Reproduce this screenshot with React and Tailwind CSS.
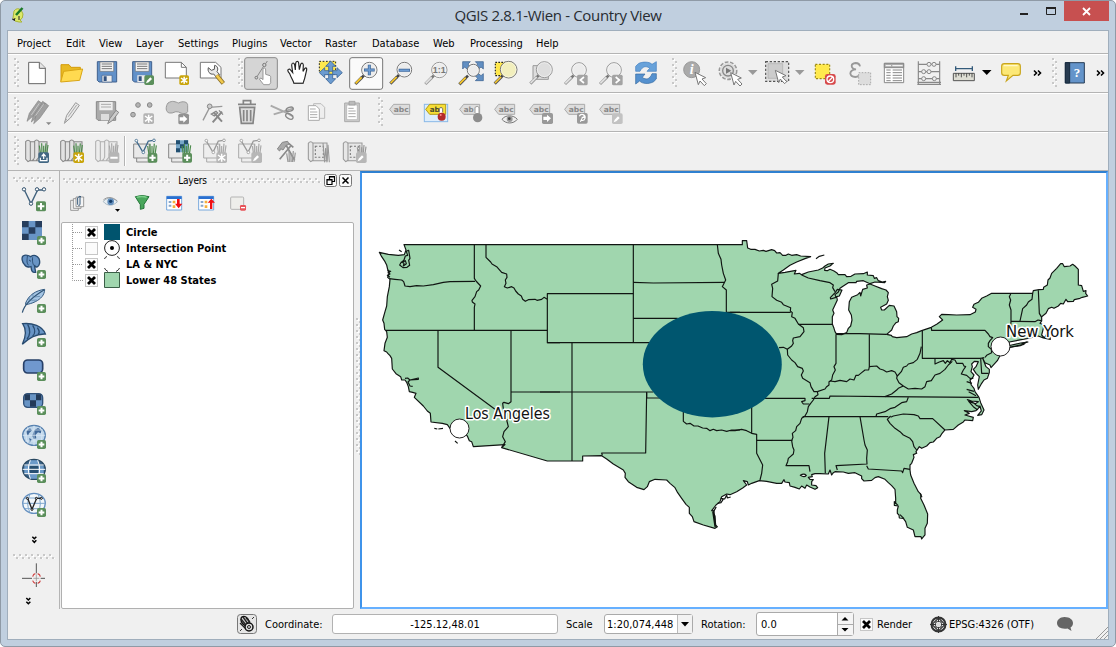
import React from "react";

const ui = "font-['DejaVu_Sans_Condensed','DejaVu_Sans',sans-serif] text-[11px] leading-[14px] text-black";

/* Icon artwork is drawn at three units per pixel; x and y give the origin of the cell. */
function Ico({ x, y, w = 35, h = 38, children, className = "" }) {
  return (
    <svg width={w} height={h} viewBox={`${x * 3} ${y * 3} ${w * 3} ${h * 3}`} className={`block shrink-0 ${className}`} fill="none">
      {children}
    </svg>
  );
}

function Grip({ w = 5, h = 29, className = "" }) {
  const dots = [];
  if (h > w) for (let y = 0; y < h - 2; y += 6) dots.push([0, y], [3, y + 3]);
  else for (let x = 0; x < w - 2; x += 6) dots.push([x, 0], [x + 3, 3]);
  return (
    <svg width={w} height={h} className={`block shrink-0 ${className}`} shapeRendering="crispEdges">
      {dots.map(([a, b], i) => (
        <g key={i}>
          <rect x={a + 1} y={b + 1} width="2" height="2" fill="#fff" />
          <rect x={a} y={b} width="2" height="2" fill="#c8c8c8" />
        </g>
      ))}
    </svg>
  );
}

function Badge({ x, y, kind = "plus", fill = "#5b8f5b", s = 27 }) {
  const c = s / 2;
  return (
    <g transform={`translate(${x} ${y})`}>
      <rect width={s} height={s} rx="5" fill={fill} />
      {kind === "plus" && <path d={`M${c} 5V${s - 5}M5 ${c}H${s - 5}`} stroke="#fff" strokeWidth="6" />}
      {kind === "minus" && <path d={`M5 ${c}H${s - 5}`} stroke="#fff" strokeWidth="6" />}
      {kind === "star" && <path d={`M${c} 4V${s - 4}M5 8L${s - 5} ${s - 8}M5 ${s - 8}L${s - 5} 8`} stroke="#fff" strokeWidth="4.5" />}
      {kind === "pen" && <path d={`M5 ${s - 5}l3-8 10-10 5 5-10 10z`} fill="#fff" />}
      {kind === "arrow" && <path d={`M4 11h11V5l12 11-12 11v-6H4z`} fill="#fff" />}
      {kind === "lt" && <path d={`M21 7L10 ${c} 21 ${s - 7}`} stroke="#fff" strokeWidth="5" />}
      {kind === "gt" && <path d={`M11 7L22 ${c} 11 ${s - 7}`} stroke="#fff" strokeWidth="5" />}
      {kind === "turn" && <path d="M7 10a9 9 0 1 1 6 12M14 13h7v-5M16 15l-6 11" stroke="#fff" strokeWidth="3.500" />}
      {kind === "share" && <path d="M6 16v9h20v-9M16 20V6M10 12l6-7 6 7" stroke="#fff" strokeWidth="3.500" />}
    </g>
  );
}

function Lens({ cx, cy, r = 22, color = true, fill = "#ececec", children }) {
  return (
    <g>
      <path d={`M${cx - 16} ${cy + 16}L${cx - 24} ${cy + 24}`} stroke={color ? "#444" : "#777"} strokeWidth="8" />
      <path d={`M${cx - 22} ${cy + 22}L${cx - 42} ${cy + 42}`} stroke={color ? "#555" : "#999"} strokeWidth="9" />
      <path d={`M${cx - 23} ${cy + 22}L${cx - 41} ${cy + 40}`} stroke={color ? "#fcca28" : "#e2e2e2"} strokeWidth="5" />
      <circle cx={cx} cy={cy} r={r} fill={fill} stroke={color ? "#777" : "#999"} strokeWidth="3" />
      <circle cx={cx} cy={cy} r={r - 3} stroke="#fff" strokeOpacity=".7" strokeWidth="2" />
      {children}
    </g>
  );
}

const Cursor = ({ x, y }) => (
  <path transform={`translate(${x} ${y})`} d="M0 0l32 16-11 4 13 14-6 6-13-14-5 11z" fill="#fff" stroke="#777" strokeWidth="3" />
);

const Arrow = ({ fill = "#999", className = "" }) => (
  <svg width="12" height="38" viewBox="0 0 12 38" className={`block shrink-0 ${className}`}>
    <path d="M0 16h9.500L4.750 21z" fill={fill} />
  </svg>
);

const Chevrons = ({ w = 16 }) => (
  <svg width={w} height="38" viewBox={`0 0 ${w} 38`} className="block shrink-0" fill="none">
    <path d="M5 16.500l2.500 2.500L5 21.500M9 16.500l2.500 2.500L9 21.500" stroke="#000" strokeWidth="1.600" />
  </svg>
);

const ROW = "flex h-[39px] shrink-0 items-start border-b border-[#b4b4b4] pl-[6px] shadow-[inset_0_1px_0_#fff]";

function RowOne() {
  return (
    <div className={ROW}>
      <Grip className="mt-[4px]" />
      <Ico x={19} y={54}>
        <path d="M86 187h33l17 17v47H86z" fill="#fff" stroke="#666" strokeWidth="3" />
        <path d="M118 187v18h18" fill="#e5e5e5" stroke="#666" strokeWidth="3" />
      </Ico>
      <Ico x={54} y={54}>
        <path d="M183 244v-50h24l6 8h28v12" fill="#e8b923" stroke="#d49c0c" strokeWidth="3" />
        <path d="M182 246l9-32 57-7-9 34z" fill="#ffda50" stroke="#d9a514" strokeWidth="3" />
      </Ico>
      <Ico x={89} y={54}>
        <path d="M292 185h58v61h-53l-5-5z" fill="#6291c9" stroke="#40618e" strokeWidth="3" />
        <path d="M300 186h41v28h-41z" fill="#f4f4f4" stroke="#777" strokeWidth="2" />
        <path d="M305 192h31M305 199h31M305 206h31" stroke="#777" strokeWidth="3" />
        <path d="M306 226h30v20h-30z" fill="#ececec" stroke="#40618e" strokeWidth="2" /><path d="M311 229h9v14h-9z" fill="#33527f" />
      </Ico>
      <Ico x={124} y={54}>
        <path d="M398 185h57v61h-52l-5-5z" fill="#6291c9" stroke="#40618e" strokeWidth="3" />
        <path d="M406 186h41v28h-41z" fill="#f4f4f4" stroke="#777" strokeWidth="2" />
        <path d="M411 192h31M411 199h31M411 206h31" stroke="#777" strokeWidth="3" />
        <path d="M412 226h24v20h-24z" fill="#ececec" /><path d="M416 229h9v14h-9z" fill="#33527f" />
        <Badge x={433} y={226} kind="pen" s={29} />
      </Ico>
      <Ico x={159} y={54}>
        <path d="M496 187h48l15 15v32h-63z" fill="#fff" stroke="#777" strokeWidth="3" /><path d="M544 187v15h15" stroke="#777" strokeWidth="3" />
        <Badge x={538} y={226} kind="star" fill="#c9a50c" s={29} />
      </Ico>
      <Ico x={194} y={54}>
        <path d="M601 187h46l16 15v32h-62z" fill="#fff" stroke="#777" strokeWidth="3" />
        <path d="M625 203l9 8 9-3 1-12c10 2 11 13 7 19l8 9-9 9-9-11c-12 3-19-8-16-19z" fill="#e9e9e9" stroke="#555" strokeWidth="3" />
        <path d="M650 226l20 24" stroke="#8c702a" strokeWidth="13" /><path d="M650 226l19 23" stroke="#f1c94c" strokeWidth="8" />
      </Ico>
      <Grip className="mt-[4px] ml-[9px] mr-[1px]" />
      <Ico x={244} y={54}>
        <rect x="734" y="173" width="98" height="95" rx="7" fill="#d5d5d5" stroke="#8a8a8a" strokeWidth="3" />
        <path d="M790 200l-19 30M797 191l5-8" stroke="#8a8a8a" strokeWidth="3" /><circle cx="793" cy="195" r="5" stroke="#777" strokeWidth="3" /><circle cx="769" cy="233" r="4" stroke="#777" strokeWidth="3" />
        <path d="M789 206c4-4 8-2 8 4v13l13 4q2 1 2 5v16l-4 6h-17l-13-17c2-4 7-3 11 2z" fill="#fff" stroke="#888" strokeWidth="2.500" />
      </Ico>
      <Ico x={279} y={54}>
        <path d="M869 221c-8-8-7-14 0-14l9 11-3-23c1-8 7-8 9 0l2 15 1-20c1-8 9-8 9 0l2 19 4-16c3-6 8-4 8 3l-1 18 5-8c4-4 7-2 6 4l-6 25-5 15h-27c-4-12-9-17-13-29z" fill="#fff" stroke="#222" strokeWidth="3.500" />
        <path d="M882 249h28" stroke="#888" strokeWidth="2" />
      </Ico>
      <Ico x={314} y={54}>
        <path d="M958 184h49v39h-40l-9-9z" fill="#ffe84c" stroke="#222" strokeWidth="3" strokeDasharray="5 5" />
        <path d="M992 183l15 16h-9v15h-12v-15h-9zM992 252l15-16h-9v-13h-12v13h-9zM958 218l16-15v9h13v12h-13v9zM1027 218l-16-15v9h-13v12h13v9z" fill="#6b9bd0" stroke="#3b6596" strokeWidth="2.500" />
      </Ico>
      <Ico x={349} y={54}>
        <rect x="1049" y="173" width="99" height="95" rx="7" fill="#fafafa" stroke="#777" strokeWidth="3" />
        <Lens cx={1108} cy={210} r={23}><path d="M1108 194v32M1092 210h32" stroke="#3c6496" strokeWidth="9" /><path d="M1108 196v28M1094 210h28" stroke="#6d9cd2" strokeWidth="5" /></Lens>
      </Ico>
      <Ico x={14} y={54}><Lens cx={103} cy={209}><path d="M86 211h34" stroke="#3c6496" strokeWidth="9" /><path d="M88 211h30" stroke="#6d9cd2" strokeWidth="5" /></Lens></Ico>
      <Ico x={49} y={54}><Lens cx={208} cy={210} r={23} color={false}><text x="208" y="220" textAnchor="middle" fontFamily="Liberation Sans" fontWeight="700" fontSize="27" fill="#777">1:1</text></Lens></Ico>
      <Ico x={84} y={54}>
        <path d="M278 185h23l-7 7 8 10-8 8-10-9-6 6zM340 185h-24l7 7-8 10 8 8 10-9 7 6zM340 242h-24l7-7-8-8 8-8 10 8 7-6z" fill="#628fc2" stroke="#335a8b" strokeWidth="2" />
        <Lens cx={310} cy={211} r={18} />
      </Ico>
      <Ico x={119} y={54}>
        <path d="M376 187h50v40h-50z" fill="#ffe84c" stroke="#222" strokeWidth="3.500" strokeDasharray="5 4" />
        <Lens cx={416} cy={209} r={25} fill="#f2efbd" />
      </Ico>
      <Ico x={154} y={54}>
        <path d="M489 197h46v41h-46z" fill="#ddd" stroke="#999" strokeWidth="3" /><Lens cx={523} cy={209} r={24} color={false} fill="#dedede" />
      </Ico>
      <Ico x={189} y={54}><Lens cx={627} cy={210} color={false} /><Badge x={621} y={224} kind="lt" fill="#a3a3a3" s={32} /></Ico>
      <Ico x={224} y={54}><Lens cx={732} cy={210} color={false} /><Badge x={726} y={224} kind="gt" fill="#a3a3a3" s={32} /></Ico>
      <Ico x={259} y={54}>
        <path d="M797 214v-15l8-8c13-7 34-6 41 2l13-8v29h-28l8-9c-9-8-22-7-29 9z" fill="#68a2da" stroke="#427fc0" strokeWidth="2" />
        <path d="M859 221v16l-8 8c-14 8-34 7-42-2l-12 9v-30h28l-8 10c10 8 22 7 29-11z" fill="#5591cf" stroke="#34689f" strokeWidth="2" />
      </Ico>
      <Grip className="mt-[4px] ml-[8px] mr-[1px]" />
      <Ico x={308} y={54}>
        <circle cx="965" cy="209" r="24" fill="#aaa" stroke="#999" strokeWidth="3" />
        <text x="965" y="223" textAnchor="middle" fontFamily="Liberation Serif" fontStyle="italic" fontWeight="700" fontSize="42" fill="#fff">i</text>
        <Cursor x={975} y={217} />
      </Ico>
      <Ico x={343} y={54}>
        <circle cx="1074" cy="212" r="26" stroke="#999" strokeWidth="5" strokeDasharray="11 5" /><circle cx="1074" cy="212" r="23" fill="#ddd" /><circle cx="1074" cy="212" r="16" stroke="#888" strokeWidth="4" />
        <path d="M1068 203l16 9-16 9z" fill="#777" /><Cursor x={1082} y={218} />
      </Ico>
      <Arrow />
      <Ico x={20} y={54}>
        <path d="M77 185h69v59H77z" fill="#ddd" stroke="#555" strokeWidth="3.500" strokeDasharray="7 5" /><path d="M84 191h44v44H84z" fill="#ccc" stroke="#aaa" strokeWidth="2" />
        <Cursor x={106} y={211} />
      </Ico>
      <Arrow />
      <Ico x={67} y={54}>
        <path d="M226 193h43v43h-43z" fill="#ffe94c" stroke="#9c8916" strokeWidth="3.500" strokeDasharray="6 5" />
        <rect x="255" y="222" width="32" height="32" rx="7" fill="#d7494b" /><circle cx="271" cy="238" r="10" stroke="#fff" strokeWidth="4" /><path d="M264 246l15-16" stroke="#fff" strokeWidth="4" />
      </Ico>
      <Ico x={102} y={54}>
        <path d="M360 199q-2-10-13-10-12 1-12 9 1 9 13 10-16 1-17 12 1 10 15 11 13-1 16-11" stroke="#999" strokeWidth="5.500" />
        <path d="M356 218h36v36h-36z" fill="#ddd" stroke="#aaa" strokeWidth="3" strokeDasharray="5 4" />
      </Ico>
      <Ico x={137} y={54}>
        <path d="M433 190h58v58h-58z" fill="#fff" stroke="#888" strokeWidth="3" /><path d="M433 190h58v13h-58z" fill="#aaa" stroke="#888" strokeWidth="3" />
        <path d="M437 197h16M457 197h31" stroke="#fff" strokeWidth="3" />
        <path d="M439 210h13M458 210h28M439 218h13M458 218h28M439 226h13M458 226h28M439 234h13M458 234h28M439 242h13M458 242h28" stroke="#888" strokeWidth="3" />
      </Ico>
      <Ico x={172} y={54}>
        <path d="M535 184v68M599 184v68M532 253h71M532 247h71M535 193h64M535 215h64M535 236h64" stroke="#888" strokeWidth="3.500" />
        <g fill="#eee" stroke="#888" strokeWidth="3"><circle cx="567" cy="193" r="6" /><circle cx="582" cy="193" r="6" /><circle cx="551" cy="215" r="6" /><circle cx="567" cy="215" r="6" /><circle cx="551" cy="236" r="6" /><circle cx="583" cy="236" r="6" /></g>
      </Ico>
      <Ico x={207} y={54}>
        <path d="M647 199v14M697 199v14M647 206h50" stroke="#345b7b" strokeWidth="4" />
        <path d="M640 220h63v22h-63z" fill="#deded4" stroke="#555" strokeWidth="3" /><path d="M648 220v12M656 220v7M664 220v12M672 220v7M680 220v12M688 220v7M696 220v12" stroke="#333" strokeWidth="2.500" />
      </Ico>
      <Arrow fill="#000" />
      <Ico x={254} y={54}>
        <path d="M793 191h40q8 0 8 8v19q0 8-8 8h-14l-20 17 6-17h-12q-8 0-8-8v-19q0-8 8-8z" fill="#fce877" stroke="#c9a51c" strokeWidth="3.500" /><path d="M791 197h42" stroke="#fff8c8" strokeWidth="4" />
      </Ico>
      <Chevrons w={20} />
      <Grip className="mt-[4px] ml-[3px] mr-[1px]" />
      <Ico x={318} y={54} w={34}>
        <path d="M976 188h57v61h-57z" fill="#6494ca" stroke="#263c55" strokeWidth="3" /><path d="M976 188h13v61h-13z" fill="#273b50" stroke="#172a3d" strokeWidth="3" />
        <text x="1011" y="231" textAnchor="middle" fontFamily="Liberation Serif" fontWeight="700" fontSize="39" fill="#fff">?</text>
      </Ico>
      <Chevrons w={14} />
    </div>
  );
}

function Tag({ x, label = "abc", yellow, children }) {
  return (
    <g>
      <path d={`M${x} 328l12-15h48v30h-48z`} fill={yellow ? "#f7de35" : "#ddd"} stroke={yellow ? "#b09b1c" : "#aaa"} strokeWidth="3" />
      <text x={x + 12} y="335" fontFamily="DejaVu Sans" fontWeight="700" fontSize="22" textLength={label.length * 15} lengthAdjust="spacingAndGlyphs" fill={yellow ? "#4b4b2c" : "#888"}>{label}</text>
      {children}
    </g>
  );
}

function RowTwo() {
  const pencil = "l7-24 27-38 11 8-27 38z";
  return (
    <div className={ROW}>
      <Grip className="mt-[4px]" />
      <Ico x={19} y={93}>
        <g fill="#a0a0a0" stroke="#858585" strokeWidth="2"><path d={`M94 366${pencil}`} /><path d={`M101 371${pencil}`} /><path d={`M81 364${pencil}`} /></g>
        <path d="M94 345l24-35M107 347l24-34" stroke="#c8c8c8" strokeWidth="3" /><path d="M138 367h16l-8 8z" fill="#888" />
      </Ico>
      <Ico x={54} y={93}><path d={`M193 370${pencil}`} fill="#e8e8e8" stroke="#999" strokeWidth="3" /><path d="M205 350l25-35M193 369l7-12" stroke="#aaa" strokeWidth="3" /></Ico>
      <Ico x={89} y={93}>
        <path d="M289 305h58v56h-53l-5-5z" fill="#aaa" stroke="#888" strokeWidth="3" /><path d="M298 306h40v25h-40z" fill="#eee" /><path d="M303 313h30M303 321h30" stroke="#aaa" strokeWidth="3" /><path d="M303 342h24v19h-24z" fill="#ddd" />
        <path d="M323 371l7-16 18-24 8 6-18 24z" fill="#ccc" stroke="#888" strokeWidth="3" />
      </Ico>
      <Ico x={124} y={93}>
        <g fill="#b4b4b4" stroke="#888" strokeWidth="3"><circle cx="414" cy="315" r="7" /><circle cx="449" cy="315" r="7" /><circle cx="399" cy="344" r="7" /></g>
        <Badge x={430} y={340} kind="star" fill="#b4b4b4" s={32} />
      </Ico>
      <Ico x={159} y={93}>
        <path d="M504 309c14-9 22-3 32 0 12-7 28-4 27 8v18c-4 8-17 7-27 1-14-4-14 5-27 3-14-2-12-21-5-30z" fill="#c6c6c6" stroke="#999" strokeWidth="3" /><Badge x={535} y={341} kind="arrow" fill="#929292" s={32} />
      </Ico>
      <Ico x={194} y={93}>
        <path d="M609 361l20-39 38-3" stroke="#999" strokeWidth="4" /><circle cx="629" cy="319" r="7" fill="#ccc" stroke="#888" strokeWidth="3" />
        <path d="M641 337l25 28M638 367l28-32" stroke="#888" strokeWidth="6" /><path d="M634 342l14-8 5 5-10 9zM657 331l12 13" stroke="#888" strokeWidth="4" />
      </Ico>
      <Ico x={229} y={93}>
        <path d="M714 313h54M730 311v-9h22v9" stroke="#858585" strokeWidth="5" /><path d="M719 322h45l-5 48h-35z" fill="#ddd" stroke="#858585" strokeWidth="5" /><path d="M731 330v34M741 330v34M752 330v34" stroke="#858585" strokeWidth="5" />
      </Ico>
      <Ico x={264} y={93}>
        <path d="M812 317l53 24M821 343l60-18M865 341l14 8" stroke="#aaa" strokeWidth="6" /><ellipse cx="869" cy="328" rx="11" ry="6" transform="rotate(-18 869 328)" stroke="#888" strokeWidth="4" /><ellipse cx="868" cy="349" rx="12" ry="7" transform="rotate(30 868 349)" stroke="#888" strokeWidth="4" />
      </Ico>
      <Ico x={299} y={93}>
        <path d="M941 311h22l11 11v33h-33z" fill="#eee" stroke="#bbb" strokeWidth="3" /><path d="M925 317h23l10 10v34h-33z" fill="#fff" stroke="#aaa" strokeWidth="3" /><path d="M930 327h17M930 336h22M930 344h22M930 352h22" stroke="#aaa" strokeWidth="3" />
      </Ico>
      <Ico x={334} y={93}>
        <path d="M1034 309h44v56h-44z" fill="#ccc" stroke="#aaa" strokeWidth="3" /><path d="M1040 315h32v44h-32z" fill="#fff" stroke="#aaa" strokeWidth="2" /><path d="M1047 304h18v11h-18z" fill="#bbb" stroke="#999" strokeWidth="2" /><path d="M1045 325h16M1045 333h22M1045 341h22M1045 350h22" stroke="#aaa" strokeWidth="3" />
      </Ico>
      <Grip className="mt-[4px] ml-[9px] mr-[1px]" />
      <Ico x={14} y={93}><Tag x={59} /></Ico>
      <Ico x={49} y={93}>
        <rect x="163" y="313" width="70" height="52" fill="#deedfb" stroke="#89b9e8" strokeWidth="3" />
        <Tag x={167} label="ab" yellow /><path d="M213 325v24" stroke="#fff" strokeWidth="9" /><path d="M208 337v-12q5-6 10 0v12" stroke="#777" strokeWidth="3" /><circle cx="215" cy="350" r="12" fill="#b42c2b" /><circle cx="212" cy="345" r="3" fill="#f88" />
      </Ico>
      <Ico x={84} y={93}><Tag x={269} label="ab" /><path d="M315 339v-17q7-6 12 0v17" fill="#fff" stroke="#999" strokeWidth="3" /><circle cx="323" cy="353" r="14" fill="#8d8d8d" /></Ico>
      <Ico x={119} y={93}><Tag x={374} /><path d="M396 358c9-14 35-14 46 0-11 14-34 15-46 0z" fill="#eee" stroke="#777" strokeWidth="3" /><circle cx="419" cy="357" r="9" fill="#999" /><circle cx="418" cy="356" r="4" fill="#444" /></Ico>
      <Ico x={154} y={93}><Tag x={479} /><Badge x={516} y={339} kind="arrow" fill="#999" s={33} /></Ico>
      <Ico x={189} y={93}><Tag x={584} /><Badge x={621} y={339} kind="turn" fill="#999" s={32} /></Ico>
      <Ico x={224} y={93}><Tag x={689} /><Badge x={726} y={340} kind="pen" fill="#c2c2c2" s={32} /></Ico>
    </div>
  );
}

function Grass({ x, y, color = "#4e8c4e" }) {
  return <path transform={`translate(${x} ${y})`} d="M5 34L1 8M9 34L8 1M14 34L14 8M18 34L21 1M23 34L27 6" stroke={color} strokeWidth="3.600" />;
}

function Mapsheet({ x, s = "#888", f = "#e2e2e2" }) {
  return <path d={`M${x + 14} 425h12q7-10 14 0h24v57H${x + 10}M${x} 425q7-9 14 0v56l-7 4-7-8zM${x + 27} 425v46q-2 9-9 11M${x + 40} 425v46l-8 10`} fill={f} stroke={s} strokeWidth="3.200" />;
}

function RowThree() {
  return (
    <div className={ROW}>
      <Grip className="mt-[4px]" />
      <Ico x={19} y={132}><Mapsheet x={77} /><Grass x={117} y={429} /><Badge x={115} y={457} kind="share" fill="#426783" s={32} /></Ico>
      <Ico x={54} y={132}><Mapsheet x={182} /><Grass x={220} y={429} /><Badge x={220} y={457} kind="star" fill="#c9a50c" s={32} /></Ico>
      <Ico x={89} y={132}><Mapsheet x={287} s="#b0b0b0" f="#ececec" /><Grass x={327} y={429} color="#a8a8a8" /><Badge x={326} y={457} kind="minus" fill="#b5b5b5" s={32} /></Ico>
      <div className="mt-[4px] mr-[1px] ml-[0px] h-[30px] w-[2px] border-l border-[#b4b4b4] bg-white" />
      <Ico x={127} y={132}>
        <path d="M401 432h47v42h-47zM410 474v12h48" fill="#e9e9e9" stroke="#888" strokeWidth="3" />
        <path d="M409 423l20 34 16-34 16-2" stroke="#406a8c" strokeWidth="4" /><g fill="#fff" stroke="#406a8c" strokeWidth="2.500"><circle cx="409" cy="422" r="4" /><circle cx="430" cy="457" r="4" /><circle cx="462" cy="421" r="4" /></g>
        <Grass x={442} y={430} /><Badge x={443} y={459} s={29} />
      </Ico>
      <Ico x={162} y={132}>
        <path d="M506 432h47v42h-47zM515 474v12h44" fill="#e9e9e9" stroke="#888" strokeWidth="3" />
        <path d="M528 421h37v36h-37z" fill="#78a7c8" /><path d="M528 421h12v12h-12zM552 421h12v12h-12zM540 433h12v12h-12zM528 445h12v12h-12z" fill="#224f70" />
        <Grass x={545} y={430} /><Badge x={547} y={459} s={29} />
      </Ico>
      {[611, 716].map((x, i) => (
        <Ico key={x} x={197 + 35 * i} y={132}>
          <path d={`M${x} 432h47v42h-47zM${x + 9} 474v12h48`} fill="#eee" stroke="#aaa" strokeWidth="3" />
          <path d={`M${x + 8} 423l20 34 16-34 16-2`} stroke="#999" strokeWidth="4" /><g fill="#fff" stroke="#999" strokeWidth="2.500"><circle cx={x + 8} cy="422" r="4" /><circle cx={x + 29} cy="457" r="4" /><circle cx={x + 61} cy="421" r="4" /></g>
          <Grass x={x + 40} y={430} color="#aaa" /><Badge x={x + 38} y={457} kind={i ? "pen" : "star"} fill="#b7b7b7" s={32} />
        </Ico>
      ))}
      <Ico x={267} y={132}>
        <path d="M832 447l15-20 16-3 4 8-9 5-9 13-7-4-3 7z" fill="#aaa" stroke="#888" strokeWidth="3" /><path d="M858 435l26 46M839 478l33-40" stroke="#8a8a8a" strokeWidth="5" /><path d="M866 430l14 12" stroke="#888" strokeWidth="5" /><Grass x={859} y={452} color="#999" />
      </Ico>
      {[925, 1030].map((x, i) => (
        <Ico key={x} x={302 + 35 * i} y={132}>
          <path d={`M${x + 14} 429h42v53H${x + 10}M${x} 430q7-10 14 0v51l-7 4-7-8z`} fill="#e7e7e7" stroke="#999" strokeWidth="3.200" />
          <path d={`M${x + 21} 439h24v33h-24z`} stroke="#777" strokeWidth="3.200" strokeDasharray="6 5" />
          {i ? <><Grass x={x + 41} y={434} color="#999" /><Badge x={x + 38} y={457} kind="pen" fill="#b7b7b7" s={32} /></> : <path d={`M${x + 44} 429l5 58 3-43 4 43 3-53 4 53`} stroke="#999" strokeWidth="3.200" />}
        </Ico>
      ))}
    </div>
  );
}

const Add = ({ y }) => <Badge x={111} y={y} s={27} />;

function SideBar() {
  return (
    <div className="flex w-[52px] shrink-0 flex-col border-r border-[#b4b4b4] pl-[1px]">
      <Grip w={43} h={5} className="mt-[6px] ml-[4px]" />
      <Ico x={9} y={12} w={50} h={34}>
        <path d="M73 60l20 41 20-41h18" stroke="#40617d" strokeWidth="4" /><g fill="#fff" stroke="#31516d" strokeWidth="3"><circle cx="72" cy="58" r="5" /><circle cx="93" cy="101" r="5" /><circle cx="111" cy="58" r="5" /><circle cx="132" cy="58" r="5" /></g><Badge x={108} y={94} s={30} />
      </Ico>
      <Ico x={9} y={46} w={50} h={34}>
        <path d="M66 153h60v57H66z" fill="#6894c5" /><path d="M66 153h20v19H66zM106 153h20v19h-20zM86 172h20v19H86zM66 191h20v19H66z" fill="#263d5c" /><Add y={198} />
      </Ico>
      <Ico x={9} y={80} w={50} h={34}>
        <path d="M69 258c8-5 16-2 23 2 10-8 20-3 25 6 4 9 2 23-6 25-5 1-7-4-8-6l4 22c-10 2-13-4-14-17-10 3-15 2-20-7-7-8-9-20-4-25z" fill="#6894c5" stroke="#294c72" strokeWidth="4" /><path d="M82 258c0 10-4 20 4 28M98 262c-2 12 1 22 4 24M87 270l6 4" stroke="#294c72" strokeWidth="3" /><Add y={300} />
      </Ico>
      <Ico x={9} y={114} w={50} h={34}>
        <path d="M77 399c8-22 30-38 57-41 0 17-12 29-28 37-10 5-18 7-29 9z" fill="#a5c5e4" stroke="#365c82" strokeWidth="3" /><path d="M67 428c5-24 28-46 66-69" stroke="#2f5274" strokeWidth="3.500" /><path d="M88 394l-1-12M100 383l-2-12M94 391l16-1M104 381l16-2" stroke="#4e769c" strokeWidth="2" /><Add y={402} />
      </Ico>
      <Ico x={9} y={148} w={50} h={34}>
        <path d="M68 461c28-3 60 7 68 31-23-1-44 6-69 31 11-23 14-43 1-62z" fill="#6894c5" stroke="#284b70" strokeWidth="4" /><path d="M83 463c9 15 8 33-2 44M98 466c8 12 8 25 0 32M112 473c7 10 6 17 2 20" stroke="#284b70" strokeWidth="4" /><Add y={504} />
      </Ico>
      <Ico x={9} y={182} w={50} h={34}><rect x="71" y="570" width="57" height="39" rx="12" fill="#7098ce" stroke="#263f67" strokeWidth="5" /><Add y={606} /></Ico>
      <Ico x={9} y={216} w={50} h={34}>
        <rect x="71" y="671" width="57" height="41" rx="12" fill="#6894c5" stroke="#31527a" strokeWidth="4" /><path d="M74 673h16v18H74zM108 673h16v18h-16zM90 691h18v19H90z" fill="#233a58" /><Add y={708} />
      </Ico>
      <Ico x={9} y={250} w={50} h={34}>
        <ellipse cx="102" cy="796" rx="34" ry="30" fill="#bfd6ea" stroke="#547fae" strokeWidth="4" /><path d="M78 783l12-8 6 6-9 9-3 8-6-11zM103 780l11-6 12 7-4 9-8-3-7 7 2 11-8 2-4-10zM88 803l7 6-6 9z" fill="#41699a" /><path d="M102 767v59M68 796h68M75 780h54M75 813h54M84 771q-12 25 0 50M120 771q12 25 0 50" stroke="#e1edf7" strokeWidth="2" /><Add y={810} />
      </Ico>
      <Ico x={9} y={284} w={50} h={34}>
        <ellipse cx="102" cy="898" rx="34" ry="30" fill="#386289" stroke="#294861" strokeWidth="4" /><path d="M73 887h58v23H73zM89 871h26v55H89z" fill="#6c9bc9" /><path d="M89 887h26v23H89z" fill="#275071" /><path d="M68 898h68M73 885h58M73 911h58M91 871q-12 27 0 55M113 871q12 27 0 55" stroke="#fff" strokeWidth="3" /><Add y={912} />
      </Ico>
      <Ico x={9} y={318} w={50} h={34}>
        <ellipse cx="102" cy="1000" rx="34" ry="30" fill="#f2f7fa" stroke="#648fbf" strokeWidth="4" /><path d="M68 1000h68M75 984h54M75 1016h54M90 973q-14 28 0 55M114 973q14 28 0 55" stroke="#80a8ce" strokeWidth="3" /><path d="M83 985l13 33 14-33h14" stroke="#222" strokeWidth="4" /><g fill="#fff" stroke="#111" strokeWidth="3"><circle cx="82" cy="985" r="3" /><circle cx="96" cy="1018" r="3" /><circle cx="109" cy="985" r="3" /><circle cx="124" cy="985" r="3" /></g><Add y={1014} />
      </Ico>
      <Ico x={9} y={352} w={50} h={28}><path d="M97 1100l6 6 6-6M97 1111l6 6 6-6" stroke="#000" strokeWidth="4.500" /></Ico>
      <Grip w={43} h={5} className="mt-[4px] ml-[4px]" />
      <Ico x={9} y={181} w={50} h={34} className="mt-[2px]">
        <path d="M109 550v30M109 606v15M66 595h30M122 595h13" stroke="#555" strokeWidth="3" /><path d="M109 583v21M100 595h18" stroke="#888" strokeWidth="2" /><path d="M98 590q2-8 8-9M113 581q7 2 8 9M98 602q2 6 8 8M113 610q7-2 8-8" stroke="#d04444" strokeWidth="3.500" />
      </Ico>
      <Ico x={9} y={215} w={50} h={13}><path d="M79 654l6 6 6-6M79 665l6 6 6-6" stroke="#000" strokeWidth="4.500" /></Ico>
    </div>
  );
}

function Check({ on }) {
  return (
    <svg width="13" height="13" viewBox="0 0 13 13" className="block shrink-0">
      <rect x=".5" y=".5" width="12" height="12" fill="#fbfbfb" stroke="#c6c6c6" />
      {on && <path d="M3 3l7 7M10 3l-7 7" stroke="#000" strokeWidth="2.800" />}
    </svg>
  );
}

function LayerRow({ on, name, last, children }) {
  return (
    <div className="flex h-[16px] items-center">
      <svg width="23" height="16" className="block shrink-0" fill="none"><path d={last ? "M10.500 0V8.500H21" : "M10.500 0V16M11 8.500H21"} stroke="#999" strokeDasharray="1 1" /></svg>
      <Check on={on} />
      <svg width="16" height="16" className="ml-[6px] block shrink-0" fill="none">{children}</svg>
      <span className="ml-[6px] whitespace-nowrap pt-px font-bold">{name}</span>
    </div>
  );
}

function LayersPanel() {
  return (
    <div className="flex w-[294px] shrink-0 flex-col pl-[1px]">
      <div className="flex h-[19px] items-center pl-[2px]">
        <Grip w={109} h={5} />
        <span className="w-[41px] text-center text-[10px] leading-[14px] tracking-[-0.2px] pt-px">Layers</span>
        <Grip w={109} h={5} />
        <svg width="30" height="16" viewBox="0 0 30 16" className="ml-[1px] block" fill="none" stroke="#777">
          <rect x="1.500" y="1.500" width="12" height="12" rx="2" fill="#fafafa" /><rect x="16.500" y="1.500" width="12" height="12" rx="2" fill="#fafafa" />
          <path d="M6.500 6V3.500h5v5H9M4 6.500h5v5H4zM6 4h6M4 7h5" stroke="#000" strokeWidth="1.200" /><path d="M19.500 4.500l6 6M25.500 4.500l-6 6" stroke="#000" strokeWidth="1.500" />
        </svg>
      </div>
      <div className="flex h-[32px] items-start pl-[1px]">
        <Ico x={62} y={20} w={32} h={30}><path d="M212 91h23v30h-23z" fill="#f4f4f4" stroke="#888" strokeWidth="2.500" /><path d="M220 86h23v29h-23z" fill="#f4f4f4" stroke="#888" strokeWidth="2.500" /><path d="M228 81h23v29h-23z" fill="#f4f4f4" stroke="#888" strokeWidth="2.500" /><path d="M240 79v25q-4 6-7-1V84q4-8 10-4" stroke="#35587a" strokeWidth="3" /></Ico>
        <Ico x={94} y={20} w={32} h={30}><path d="M310 95c9-14 29-14 42 0-12 14-31 14-42 0z" fill="#e6edf1" stroke="#8ba0b0" strokeWidth="2" /><path d="M310 90c12-11 27-10 42 3" stroke="#9a9a9a" strokeWidth="3" /><circle cx="332" cy="95" r="10" fill="#638fbd" /><circle cx="332" cy="94" r="5" fill="#163d68" /><path d="M345 117h15l-7 8z" fill="#000" /></Ico>
        <Ico x={126} y={20} w={32} h={30}><path d="M406 80q20-7 41 0l-15 23v12l-11 3v-14z" fill="#49a65b" stroke="#26773a" strokeWidth="3" /><path d="M410 82q16-5 30 0" stroke="#7bd08b" strokeWidth="4" /></Ico>
        {[500, 596].map((x, i) => (
          <Ico key={x} x={158 + 32 * i} y={20} w={32} h={30}>
            <path d={`M${x} 79h45v41h-45z`} fill="#fff" stroke="#77a8dc" strokeWidth="3" /><path d={`M${x} 79h45v8h-45z`} fill="#2a70d0" />
            <path d={`M${x + 6} 93h8v6h-8zM${x + 6} 104h8v6h-8z`} fill="#88a7cb" /><path d={`M${x + 18} 92h8v8h-8zM${x + 18} 106h8v8h-8z`} fill="#f5b03b" />
            <path d={i ? `M${x + 34} 117v-19h-7l11-12 11 12h-8v19z` : `M${x + 31} 87v14h-6l11 14 11-14h-8V87z`} fill="#f00d12" />
          </Ico>
        ))}
        <Ico x={222} y={20} w={32} h={30}><rect x="692" y="81" width="39" height="37" rx="3" fill="#eeeeeb" stroke="#b4b4b4" strokeWidth="3" /><rect x="720" y="105" width="18" height="17" rx="4" fill="#e7545a" /><path d="M723 113h12" stroke="#fff" strokeWidth="4" /></Ico>
      </div>
      <div className="flex flex-1 flex-col rounded-[2px] border border-[#b0b0b0] bg-white pt-[1px]">
        <LayerRow on name="Circle"><path d="M0 0h16v16H0z" fill="#00546e" /></LayerRow>
        <LayerRow name="Intersection Point"><circle cx="8" cy="8" r="7.400" fill="#fff" stroke="#222" /><circle cx="8" cy="8" r="2" fill="#000" /></LayerRow>
        <LayerRow on name="LA & NYC"><path d="M.500 3Q1 1 3 .500M15.500 3Q15 1 13 .500M.500 12Q1 14 4 15.500M12 15.500Q15 14 15.500 12" stroke="#333" /></LayerRow>
        <LayerRow on last name="Lower 48 States"><path d="M.500.500h15v15H.500z" fill="#a0d6ae" stroke="#3a5f47" /></LayerRow>
      </div>
    </div>
  );
}

/* Shift a list of "x,y" pairs into the shared map grid. */
function pts(dx, dy, s) {
  return s.trim().split(/\s+/).map((p) => { const [a, b] = p.split(","); return `${+a + dx},${+b + dy}`; }).join(" ");
}

const OUTLINE = "M" + [
  pts(0, 0, "132,74 600,74"),
  pts(1110, 0, "37,74 37,62 50,62 53,84 62,88 75,88 88,93 100,91 108,94 125,89 134,92 140,99 150,98 158,106 168,106 175,102 185,106 200,104 212,108 242,110 225,116 200,126 180,136 160,150 145,160 165,157 198,151 193,162 208,160 215,164 235,156 265,150 278,144 285,138 295,132 310,130 300,138 285,144 284,151 292,152 300,148 312,153 320,158 325,164 345,164 350,170 363,169 375,162 400,161 412,156 412,165 430,167 433,175 440,173 445,182 457,186 467,184 464,188 435,186 420,191 400,182 380,184 378,188 355,188 340,198 330,205 325,216 315,224 318,232 302,237 301,233 316,217 322,208 336,210 328,228 320,230 322,240 315,255 308,270 312,280 307,290 307,312 312,325 315,335 320,343 335,344 350,338 355,325 362,318 366,300 364,285 356,270 358,245 365,232 383,224 390,217 392,228 398,208 412,204 410,195 420,192 435,198 455,206 468,210 475,218 472,230 475,241 470,252 452,262 455,270 463,270 478,256 492,258 500,275 501,290 506,295 505,305 498,308 490,318 485,330 470,343 484,346 487,350 500,353 530,350 545,342 560,338 575,332"),
  pts(1650, 0, "64,322 80,313 98,300 88,290 95,283 115,284 140,285 180,284 196,276 198,268 188,262 192,253 205,247 215,235 230,228 245,220 368,220 370,212 387,209 400,208 401,202 412,195 414,180 420,174 425,160 440,145 452,131 458,131 463,140 480,138 488,133 495,138 505,148 505,195 515,197 520,214 528,212 527,220 533,228 517,232 510,235 493,239 490,244 473,245 468,238 460,252 452,250 445,258 432,265 425,262 415,266 408,280 395,290 395,303 390,310 400,315 400,325 395,345 403,354 410,342 420,352 421,358 400,354 385,348 350,356 298,366 296,384 350,366 331,377 298,382 271,405 262,422 243,443 240,435 225,428 218,415 228,440 238,448 238,458 232,475 222,480 215,490 205,508 203,495 206,480 208,470 198,460 190,448 198,440 205,425 193,424 185,432 187,440 183,455 192,465 187,475 180,480 184,495 192,505 195,515 207,532 212,548 222,570 215,584 203,586 214,573 210,558 202,569 190,560 176,544 196,551 205,545 185,543 172,539 190,548 200,557 210,560 198,572 185,575 163,572 178,580 165,585 190,592 188,602 165,600 160,606 145,615 130,628 105,630 95,642 90,650 80,655 70,666 60,668 50,678 35,685 28,680 18,695 20,700 10,704 12,712 5,730 0,735"),
  pts(600, 510, "1050,240 1052,255 1062,280 1075,305 1083,313 1082,325 1092,345 1103,372 1102,400 1095,415 1095,435 1085,447 1083,440 1065,440 1060,420 1042,412 1037,395 1030,385 1018,384 1017,375 1012,370 1012,360 1015,348 1003,346 1003,336 1007,340 1007,325 1005,298 995,287 985,278 975,268 955,260 945,263 935,271 912,273 905,266 905,258 885,248 865,250 850,246 825,245 820,248 815,255 810,240 805,252 780,251 765,251 755,254 757,260 745,262 750,268 760,269 755,275 755,285 768,287 773,293 765,298 750,291 740,285 735,295 725,288 718,297 705,292 690,288 688,278 675,276 672,269 665,280 650,280 620,274 598,272 575,280 565,285 562,275 550,272 560,285 548,294 530,305 510,314 500,312 485,320 480,335 468,345 455,362 462,363 468,352 462,362 461,370 465,378 466,405 472,410 465,415 430,405 402,395 397,380 388,370 388,352 378,343 365,325 353,308 345,293 330,280 320,270 285,268 268,275 262,290 252,299 240,295 230,292 205,275 195,262 196,250 190,240 160,222 140,207 125,197 68,198 68,213 0,213"),
  pts(0, 0, "562,723 425,683 435,674 340,680 335,665 328,662 322,648 300,630 270,625 262,614 247,610 213,606 211,580 202,573 190,558 163,532 168,520 158,517 148,515 145,500 140,487 135,480 125,480 122,470 108,461 97,447 95,415 90,407 84,401 80,396 72,392 75,370 82,352 80,335 74,328 72,310 68,300 75,275 80,258 82,230 88,200 90,178 83,172 88,160 83,148 80,135 75,125 65,110 58,97 85,103 115,106 133,104 138,90 132,74"),
].join(" ") + "Z";

const BORDERS = [
  [0, 0, "343,74 343,175 348,183 362,198 356,210 350,215 345,230 336,241 337,246 345,252 343,262 343,330"],
  [0, 0, "378,74 378,112 392,126 396,132 410,140 425,157 440,162 441,172 436,180 438,190 433,200 442,204 455,200 462,204 467,213 475,222 484,228 488,238 496,244 505,239 525,238 531,241 545,238 552,232 562,238"],
  [0, 0, "88,176 105,178 125,180 131,185 135,198 150,200 170,197 190,198 220,194 250,187 270,185 345,184"],
  [0, 0, "78,331 562,331"], [0, 0, "820,221 562,221 562,368 600,368"], [0, 0, "234,331 234,442 403,566 425,585 443,600"],
  [0, 0, "453,331 453,545 445,551 432,547 428,550 430,566 435,590 440,600 445,620 432,635 428,650 436,665 425,683"], [0, 0, "453,516 600,516"],
  [0, 0, "135,475 143,474 150,480 175,474 175,478 150,480 144,486 150,498 158,499"],
  [540, 0, "22,368 327,368"], [540, 0, "280,74 280,368"], [540, 0, "280,187 340,189 553,187"], [540, 0, "280,295 413,295"], [540, 0, "96,368 96,723"], [540, 0, "0,516 340,516"], [540, 0, "320,516 317,699 185,699 187,706"], [540, 0, "320,518 320,534 362,534"],
  [540, 0, "532,74 535,100 543,118 545,135 550,160 557,180 547,200 559,210 559,277 600,277"],
  [540, 0, "430,574 430,604 440,612 450,610 462,618 474,618 488,624 500,625 510,632 520,628 530,632 545,630 560,634 575,630 600,630"],
  [1110, 0, "0,277 182,277"],
  [1110, 0, "145,160 143,183 125,193 128,205 126,230 140,241 155,247 160,254 182,263 181,273 187,278 185,290 195,295 205,312 220,323 222,335 210,350 190,354 188,362 190,370 185,378 172,388 173,405 185,420 195,428 203,440 217,445 220,453 214,465 218,475 240,488 243,500 252,515 262,515 264,524 255,530 250,540 242,550 235,560 232,575 225,588 215,595 210,610 200,620 197,632 187,640 189,652 185,662 188,680 192,690 190,702 175,715 173,725 168,737 237,737 240,755"],
  [1110, 0, "205,313 308,313"], [1110, 0, "147,383 160,382 172,388"], [1110, 0, "318,343 318,430 312,440 316,450 308,465 305,480 297,485 297,495 290,500 285,507 262,515"],
  [1110, 0, "318,341 390,341 470,343"],
  [1110, 0, "418,343 418,440 416,450 405,450 395,458 385,466 378,466 372,480 360,477 350,485 330,481 315,485 300,483"],
  [1110, 0, "418,440 440,438 450,447 460,450 470,456 485,452 495,456 502,468 514,455 520,442 530,438 535,432 550,428 562,418 570,400 574,380"],
  [1110, 0, "502,465 500,475 507,488 520,498 535,507 555,505 575,507 585,500 590,485 604,482 615,465 630,460 645,448 655,435 667,424"],
  [1110, 0, "520,498 505,505 500,510 485,522 465,530"], [1110, 0, "577,333 577,415 752,415"],
  [1110, 0, "103,535 225,535 225,542 215,545 220,552 238,552"], [1110, 0, "245,535 298,535 300,528 465,530 745,532"], [1110, 0, "218,590 475,590"],
  [1110, 0, "535,532 530,545 515,548 495,562 480,566 465,575 440,582 438,590"],
  [1110, 0, "482,592 490,588 520,582 552,584 565,588 570,596 608,596 645,630"],
  [1110, 0, "482,588 472,598 480,610 495,625 510,635 520,645 540,655 548,665 552,680 560,690"],
  [1110, 0, "297,590 284,700 286,760"], [1110, 0, "390,590 402,660 405,675 412,690 410,715 411,732 318,737 322,750"], [1110, 0, "65,560 65,640 80,643 80,700 98,735 95,760 90,780"], [1110, 0, "80,661 187,661"],
  [1110, 0, "0,632 15,632 35,628 50,632 65,640"], [1110, 0, "215,165 235,174 270,182 300,188 310,195 308,203 315,215"], [1110, 0, "258,116 268,109 283,105"],
  [1650, 0, "64,322 65,331 225,331 235,342 240,350 248,353 240,362 235,370 235,380 244,388 245,398 230,406 225,412"],
  [1650, 0, "223,413 212,415 215,460 236,460"], [1650, 0, "302,222 298,230 302,240 298,255 303,270 303,305 300,340"], [1650, 0, "368,220 366,238 355,246 350,255 338,266 335,280 330,303"], [1650, 0, "303,304 375,305 384,300 393,302"], [1650, 0, "385,211 388,280 395,292"],
  [1650, 0, "75,415 75,432 88,426 100,422 106,430 112,422 120,428 125,418 135,420 140,430 158,430 162,438 167,440 160,450 154,462 170,466 180,475 190,475"],
  [1650, 0, "170,485 186,490"], [1650, 0, "170,508 192,514"], [1650, 0, "176,515 198,527"],
  [600, 510, "920,227 925,237 1025,243 1028,248 1032,235 1050,238"],
];

function MapView() {
  return (
    <svg width="745" height="434" viewBox="362 173 745 434" className="block" fontFamily="DejaVu Sans Condensed, DejaVu Sans, sans-serif">
      <g transform="translate(360 220) scale(.33333)" stroke="#101512" strokeWidth="3.500" strokeLinejoin="round" fill="none">
        <path d={OUTLINE} fill="#a0d6ae" />
        {BORDERS.map(([dx, dy, s], i) => <path key={i} d={"M" + pts(dx, dy, s)} />)}
        <path d="M124,128l8-8 4-12 7-2-4-12 7-3 4 24-4 6 3 15-8 6-12 1-10-8 5-9 8 4-2 8 9-7-3-9-7 4M117,90l8 5M82,152l10 2-8 4 6 4-8 4 8 6M223,625l9 2M235,627l14-2M285,663l8 7" />
        <path d="M1321 766q11-7 18 0-6 8-18 0z" fill="#fff" />
        <path d="M1073 850l10-2 6-9-6-4 11 2 6-12 2 9 10-3" />
        <path d="M1061 871l7 49M1058 874l7 47M1680 820l6 12M1602 844l12 12M1620 884l12 12" />
        <path d="M1942 378l40-9 22-3-18 5 6 2-50 10z" fill="#a0d6ae" />
      </g>
      <ellipse cx="712.300" cy="364.200" rx="69.500" ry="53.200" fill="#00566f" />
      <circle cx="459.500" cy="428.500" r="9.500" fill="#fff" stroke="#222" />
      <circle cx="1000.500" cy="346.500" r="9.500" fill="#fff" stroke="#222" />
      <g fontSize="15.500" fill="#111" stroke="#fff" strokeWidth="3" strokeLinejoin="round" style={{ paintOrder: "stroke" }}>
        <text x="465" y="419" textLength="85" lengthAdjust="spacingAndGlyphs">Los Angeles</text>
        <text x="1006" y="337" textLength="68" lengthAdjust="spacingAndGlyphs">New York</text>
      </g>
    </svg>
  );
}

function StatusBar() {
  return (
    <div className="flex h-[30px] shrink-0 items-center">
      <svg width="20" height="20" viewBox="0 0 20 20" className="ml-[229px] block" fill="none">
        <rect x=".5" y=".5" width="19" height="19" rx="3" fill="#e6e6e6" stroke="#777" /><ellipse cx="8" cy="7" rx="3.500" ry="5" transform="rotate(-35 8 7)" fill="#ccc" stroke="#111" strokeWidth="1.400" /><path d="M6 3l5 7M4 5l5 6M3 9l5 5M9 4l4 4" stroke="#222" strokeWidth="1.300" /><circle cx="12" cy="13" r="4" fill="#ddd" stroke="#111" strokeWidth="1.500" /><circle cx="12" cy="13" r="1.500" stroke="#222" /><path d="M15 5l2-2M3 17l2-2" stroke="#333" />
      </svg>
      <span className="ml-[8px] w-[67px] whitespace-nowrap pt-px">Coordinate:</span>
      <div className="flex h-[20px] w-[226px] items-center justify-center rounded-[3px] border border-[#b2b2b2] bg-white pt-[2px]">-125.12,48.01</div>
      <span className="ml-[8px] w-[38px] pt-px">Scale</span>
      <div className="flex h-[20px] w-[89px] items-center rounded-[3px] border border-[#aaa] bg-white pl-[2px]">
        <span className="w-[70px] whitespace-nowrap pt-[2px]">1:20,074,448</span>
        <svg width="15" height="18" className="block shrink-0"><path d="M0 0h15v18H0z" fill="#f2f2f2" /><path d="M.500 0v18" stroke="#bbb" /><path d="M4 7h8l-4 4.500z" /></svg>
      </div>
      <span className="ml-[8px] w-[55px] whitespace-nowrap pt-px">Rotation:</span>
      <div className="flex h-[24px] w-[98px] items-center rounded-[3px] border border-[#aaa] bg-white pl-[4px]">
        <span className="flex-1 pt-[2px]">0.0</span>
        <svg width="16" height="22" className="block"><path d="M0 0h16v22H0z" fill="#f5f5f5" /><path d="M.500 0v22M0 11.500h16" stroke="#aaa" /><path d="M4.500 7.500h7L8 4zM4.500 15h7L8 18.500z" /></svg>
      </div>
      <div className="ml-[6px]"><Check on /></div>
      <span className="ml-[4px] w-[53px] pt-px">Render</span>
      <svg width="17" height="17" viewBox="0 0 17 17" className="block" fill="none" stroke="#333"><circle cx="8.500" cy="8.500" r="7" strokeWidth="2" /><path d="M8.500 2l6.500 6.500-6.500 6.500L2 8.500z" strokeWidth="1.200" /><rect x="5.500" y="5.500" width="6" height="6" rx="2" fill="#ddd" /><path d="M8.500 0v5M8.500 12v5M0 8.500h5M12 8.500h5" /></svg>
      <span className="ml-[2px] w-[107px] whitespace-nowrap pt-px">EPSG:4326 (OTF)</span>
      <svg width="18" height="16" viewBox="0 0 18 16" className="block"><path d="M8.500 1C14 1 17 4 17 7c0 2-1 3.500-2.500 4.500L15.500 15l-4-2.500C5 13.500 1 11 1 7c0-3 3-6 7.500-6z" fill="#656565" /></svg>
      <svg width="13" height="13" className="ml-auto self-end" fill="none"><path d="M1 13L13 1M5 13l8-8M9 13l4-4" stroke="#999" /></svg>
    </div>
  );
}

const menus = [
  ["Project", "w-[49px]"], ["Edit", "w-[33px]"], ["View", "w-[37px]"], ["Layer", "w-[42px]"], ["Settings", "w-[54px]"], ["Plugins", "w-[48px]"],
  ["Vector", "w-[45px]"], ["Raster", "w-[47px]"], ["Database", "w-[61px]"], ["Web", "w-[37px]"], ["Processing", "w-[66px]"], ["Help", "w-[30px]"],
];

export default function App() {
  return (
    <div className={`${ui} flex h-[647px] w-[1116px] flex-col overflow-hidden rounded-[5px] border border-[#8f9aa6] bg-[#c0cfdf]`}>
      <div className="flex h-[29px] shrink-0 items-start">
        <svg width="14" height="16" viewBox="0 0 14 16" className="mt-[6px] ml-[10px] block" fill="none">
          <path d="M3 4Q6 0 10 3l2 4q0 5-3 6l2 2H8Q3 15 2 11z" fill="#dce96a" stroke="#a8b43a" /><path d="M11.500 1L5 8" stroke="#1a7a26" strokeWidth="2.500" /><path d="M1 12l3 1M3 14l1-3M8 9v4" stroke="#222" />
        </svg>
        <div className="mt-[4px] flex-1 pl-[1px] text-center font-['Open_Sans',sans-serif] text-[15px] leading-[21px] tracking-[-0.35px] text-[#282c31]">
          <span className="mr-[-80px]">QGIS 2.8.1-Wien - Country View</span>
        </div>
        <svg width="54" height="20" viewBox="0 0 54 20" className="block" fill="none"><path d="M10 13h8" stroke="#222" strokeWidth="2" /><path d="M36.500 7v6.500h9V7z" stroke="#222" /><path d="M36 7h10" stroke="#222" strokeWidth="2" /></svg>
        <div className="mr-[6px] flex h-[20px] w-[45px] items-center justify-center bg-[#c75050]">
          <svg width="9" height="9" viewBox="0 0 9 9" fill="none"><path d="M1 1l7 7M8 1l-7 7" stroke="#fff" strokeWidth="1.800" /></svg>
        </div>
      </div>
      <div className="mr-[6px] mb-[6px] ml-[6px] flex min-h-0 flex-1 flex-col border border-[#a0aebc] bg-[#f0f0f0]">
        <div className="flex h-[23px] shrink-0 items-center border-b border-[#b4b4b4] pt-[3px] pl-[9px]">
          {menus.map(([m, w]) => <span key={m} className={`${w} whitespace-nowrap`}>{m}</span>)}
        </div>
        <RowOne />
        <RowTwo />
        <RowThree />
        <div className="flex min-h-0 flex-1">
          <SideBar />
          <LayersPanel />
          <div className="flex w-[6px] items-center pl-[2px]"><Grip w={4} h={138} className="mt-[-6px]" /></div>
          <div className="min-w-0 flex-1 overflow-hidden border-2 border-t-[#2f80d0] border-r-[#66b0ff] border-b-[#66b0ff] border-l-[#3f93ea] bg-white"><MapView /></div>
        </div>
        <StatusBar />
      </div>
    </div>
  );
}
